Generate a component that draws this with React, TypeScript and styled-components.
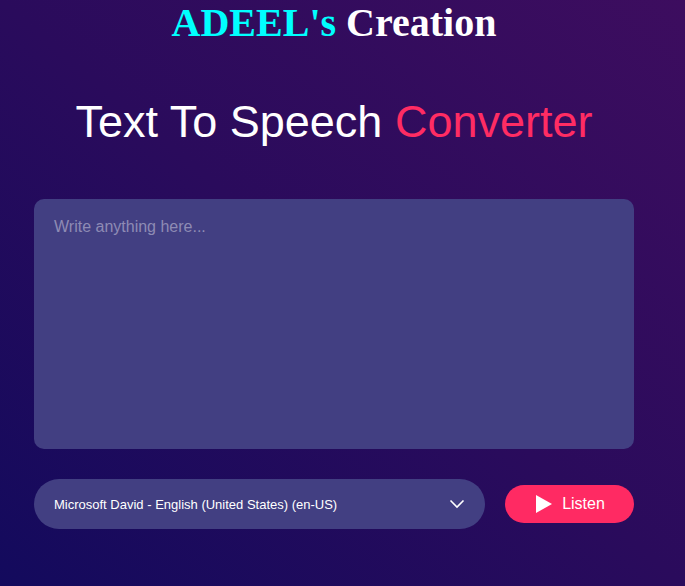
import React from "react";
import styled, { createGlobalStyle } from "styled-components";

const Global = createGlobalStyle`
  html, body { margin: 0; padding: 0; }
  body {
    min-height: 586px;
    background: linear-gradient(to top right, #130a5d 0%, #2a0b5c 50%, #3d0d5f 100%);
    font-family: "Liberation Sans", Arial, sans-serif;
  }
`;

const Page = styled.div`
  width: 668px;
  height: 586px;
  display: flex;
  flex-direction: column;
  align-items: center;
`;

const Brand = styled.h1`
  margin: 0;
  padding-top: 2px;
  font-family: "Liberation Serif", "Times New Roman", serif;
  font-weight: bold;
  font-size: 40px;
  line-height: 42px;
  color: #ffffff;
`;

const Cyan = styled.span`
  color: #00ffff;
`;

const Title = styled.h2`
  margin: 53px 0 0;
  font-weight: normal;
  font-size: 45px;
  line-height: 50px;
  color: #ffffff;
`;

const Pink = styled.span`
  color: #ff2c63;
`;

const Wrapper = styled.div`
  width: 600px;
  margin-top: 52px;
  display: flex;
  flex-direction: column;
  gap: 30px;
`;

const TextArea = styled.textarea`
  box-sizing: border-box;
  width: 600px;
  height: 250px;
  border: none;
  outline: none;
  resize: none;
  border-radius: 10px;
  background: #423f82;
  padding: 19px 20px;
  font-family: "Liberation Sans", Arial, sans-serif;
  font-size: 16px;
  color: #ffffff;
  &::placeholder {
    color: #8e8bb4;
  }
`;

const Row = styled.div`
  display: flex;
  align-items: center;
  gap: 20px;
`;

const Select = styled.div`
  box-sizing: border-box;
  width: 451px;
  height: 50px;
  border-radius: 25px;
  background: #423f82;
  display: flex;
  align-items: center;
  justify-content: space-between;
  padding: 0 20px;
  color: #ffffff;
  font-size: 13px;
`;

const Button = styled.button`
  box-sizing: border-box;
  width: 129px;
  height: 38px;
  border: none;
  border-radius: 19px;
  background: #ff2a63;
  color: #ffffff;
  font-family: "Liberation Sans", Arial, sans-serif;
  font-size: 16px;
  display: flex;
  align-items: center;
  justify-content: center;
  gap: 10px;
  padding: 0 0 0 2px;
`;

export default function App() {
  return (
    <>
      <Global />
      <Page>
        <Brand>
          <Cyan>ADEEL's</Cyan> Creation
        </Brand>
        <Title>
          Text To Speech <Pink>Converter</Pink>
        </Title>
        <Wrapper>
          <TextArea placeholder="Write anything here..." />
          <Row>
            <Select>
              <span>Microsoft David - English (United States) (en-US)</span>
              <svg width="16" height="10" viewBox="0 0 16 10">
                <polyline points="1.5,1.5 8,8 14.5,1.5" fill="none" stroke="#fff" strokeWidth="1.6" />
              </svg>
            </Select>
            <Button>
              <svg width="16" height="18" viewBox="0 0 16 18">
                <polygon points="0,0 16,9 0,18" fill="#fff" />
              </svg>
              Listen
            </Button>
          </Row>
        </Wrapper>
      </Page>
    </>
  );
}
